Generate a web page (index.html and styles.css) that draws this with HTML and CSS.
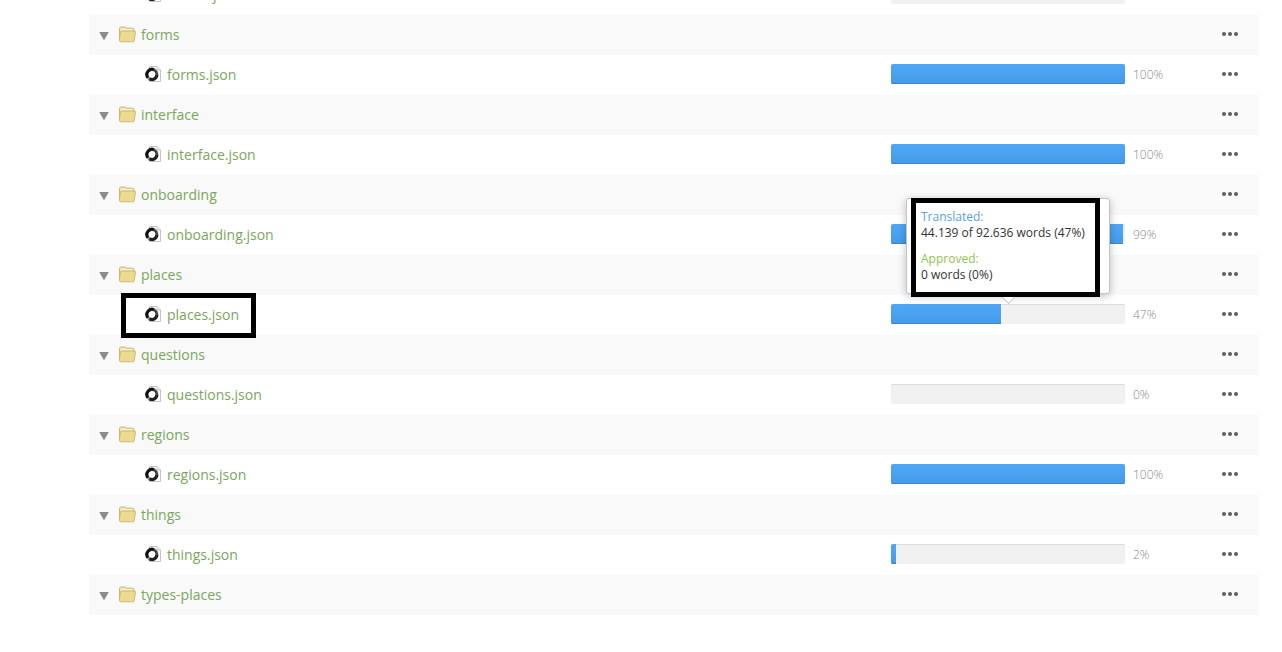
FILE: index.html
```
<!DOCTYPE html>
<html lang="en">
<head>
<meta charset="utf-8">
<title>Project files</title>
<link rel="stylesheet" href="styles.css">
<script src="tree.js" defer></script>
</head>
<body>
<svg class="symbols" aria-hidden="true">
  <symbol id="folder" viewBox="0 0 18 17">
    <path d="M1.5 13V2.5Q1.5 1 3 1H7Q8 1 8.3 2.2H14.8Q16 2.2 16 3.5V13Z" fill="#f1e6ae" stroke="#c9b57a"/>
    <path d="M2.5 5Q2.6 3.7 4 3.7H14" fill="none" stroke="#fbf5d3"/>
    <path d="M2.4 6Q2.5 5 3.5 5H16.6Q17.6 5 17.4 6L16.3 14.6Q16.1 15.8 15 15.8H3Q1.5 15.8 1.4 14.4Z" fill="#eadb90" stroke="#cdb873"/>
  </symbol>
  <symbol id="json" viewBox="0 0 17 17">
    <path d="M4.5.5H12L15.5 4V15.5H4.5Z" fill="#fff" stroke="#c4c4c4"/>
    <path d="M12 .5V4H15.5" fill="#eee" stroke="#c4c4c4"/>
    <circle cx="7" cy="8.5" r="4.9" fill="#fff" stroke="#8a8a8a" stroke-width="3"/>
    <path d="M9 3.7A5.1 5.1 0 0 0 3 11.6" fill="none" stroke="#111" stroke-width="3"/>
    <path d="M4.4 12.9A5.1 5.1 0 0 0 11.9 8.6" fill="none" stroke="#222" stroke-width="3"/>
    <path d="M9 4A4.9 4.9 0 0 1 11.8 8.6" fill="none" stroke="#444" stroke-width="2.4"/>
  </symbol>
</svg>
<main class="page">
  <ul class="tree" id="tree"></ul>
</main>
</body>
</html>
```
FILE: styles.css
```
* { box-sizing: border-box; }
body {
  margin: 0;
  background: #fff;
  color: #333;
  font: 14px/20px "Open Sans", sans-serif;
  overflow: hidden;
}
.symbols { position: absolute; width: 0; height: 0; }
.page { padding: 0 23px 0 89px; }
/* The list is scrolled part of the way through a row. */
.tree { margin: -25px 0 0; padding: 0; list-style: none; }
.row {
  display: grid;
  grid-template-columns: minmax(0, 1fr) 20% 134px;
  align-items: center;
  height: 40px;
}
.folder { background: #f9f9f9; }
.name { display: flex; align-items: center; padding-left: 10px; }
.file .name { padding-left: 56px; }
.link { color: #7ba65e; text-decoration: none; }
.toggle {
  width: 10px;
  height: 9px;
  margin: 2px 9px 0 0;
  padding: 0;
  border: 0;
  background: #8c8c8c;
  clip-path: polygon(0 0, 100% 0, 50% 100%);
}
.folder-icon { width: 18px; height: 17px; margin: 0 5px 2px 0; }
.file-icon { width: 17px; height: 17px; margin: 0 5px 2px 0; }
.bar {
  position: relative;
  height: 20px;
  margin-bottom: 2px;
  border-radius: 2px;
  background: #f1f1f1;
  box-shadow: inset 0 1px 1px #dcdcdc;
}
.fill {
  height: 100%;
  border-radius: 2px 0 0 2px;
  background: linear-gradient(#4fa7f8, #459ce8);
  box-shadow: inset 0 -1px 0 #3f86c4;
}
.fill.full { border-radius: 2px; }
.end {
  grid-column: 3;
  display: flex;
  align-items: center;
  justify-content: space-between;
  padding: 0 21px 0 8px;
}
.percent { color: #888; font-size: 12px; font-weight: 300; }
.more {
  display: flex;
  gap: 2px;
  margin: 0 0 2px auto;
  padding: 0;
  border: 0;
  background: none;
}
.more i { width: 4px; height: 4px; border-radius: 50%; background: #5e5e5e; }
.tooltip {
  position: absolute;
  left: 50%;
  bottom: 30px;
  z-index: 2;
  width: 204px;
  padding: 10px 14px;
  transform: translateX(-50%);
  border: 1px solid #c4c4c4;
  border-radius: 3px;
  background: #fff;
  box-shadow: 0 2px 8px rgba(0, 0, 0, .25);
  font-size: 12px;
  line-height: 16px;
  white-space: nowrap;
}
.tooltip::after {
  content: "";
  position: absolute;
  left: 94px;
  bottom: -8px;
  width: 14px;
  height: 14px;
  transform: rotate(45deg);
  border: solid #c4c4c4;
  border-width: 0 1px 1px 0;
  background: #fff;
  z-index: -1;
}
.tooltip dl, .tooltip dd { margin: 0; }
.tooltip dd + dt { margin-top: 10px; }
.translated { color: #5b9fe8; }
.approved { color: #94c34f; }
.mark { position: absolute; z-index: 3; border: 5px solid #000; pointer-events: none; }
.tooltip .mark { inset: -1px 9px -4px 4px; }
.marked { position: relative; }
.marked .mark { left: 32px; top: -12px; width: 135px; height: 45px; }
```
FILE: tree.js
```
const items = [
  ["emails.json", 0], ["forms"], ["forms.json", 100],
  ["interface"], ["interface.json", 100],
  ["onboarding"], ["onboarding.json", 99],
  ["places"], ["places.json", 47],
  ["questions"], ["questions.json", 0],
  ["regions"], ["regions.json", 100],
  ["things"], ["things.json", 2], ["types-places"]
];
const details = `<div class="tooltip" role="tooltip"><dl>
  <dt class="translated">Translated:</dt><dd>44.139 of 92.636 words (47%)</dd>
  <dt class="approved">Approved:</dt><dd>0 words (0%)</dd></dl><span class="mark"></span></div>`;
const more = name => `<button class="more" type="button" aria-label="Actions for ${name}"><i></i><i></i><i></i></button>`;

document.getElementById("tree").innerHTML = items.map(([name, percent]) => {
  if (percent === undefined) {
    return `<li class="row folder"><div class="name">
      <button class="toggle" type="button" aria-label="Collapse ${name}"></button>
      <svg class="folder-icon" aria-hidden="true"><use href="#folder"/></svg>
      <a class="link" href="#">${name}</a></div><div class="end">${more(name)}</div></li>`;
  }
  const open = percent === 47;
  return `<li class="row file"><div class="name${open ? " marked" : ""}">
    <svg class="file-icon" aria-hidden="true"><use href="#json"/></svg>
    <a class="link" href="#">${name}</a>${open ? '<span class="mark"></span>' : ""}</div>
    <div class="bar" role="progressbar" aria-label="${name}" aria-valuenow="${percent}">
      <div class="fill${percent === 100 ? " full" : ""}" style="width:${percent}%"></div>${open ? details : ""}</div>
    <div class="end"><span class="percent">${percent}%</span>${more(name)}</div></li>`;
}).join("");
```
